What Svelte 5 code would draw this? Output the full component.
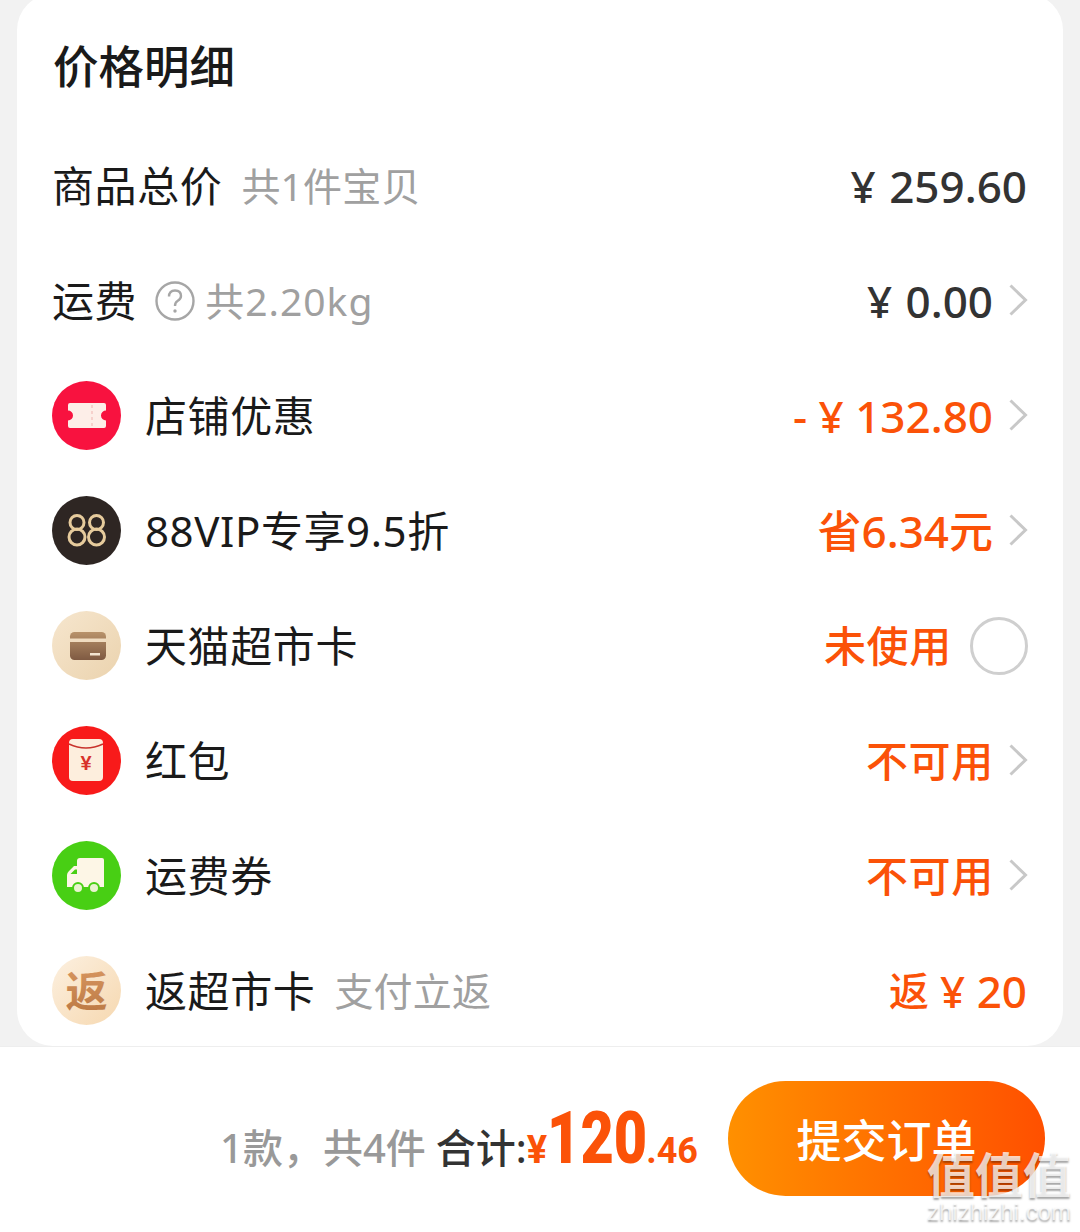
<script>
  const stack = [
    { id: "shop", label: "店铺优惠", value: "- ¥ 132.80", num: true, arrow: true },
    { id: "vip", label: "88VIP专享9.5折", value: "省6.34元", num: true, arrow: true },
    { id: "card", label: "天猫超市卡", value: "未使用", radio: true },
    { id: "red", label: "红包", value: "不可用", arrow: true },
    { id: "truck", label: "运费券", value: "不可用", arrow: true },
    { id: "back", label: "返超市卡", sub: "支付立返", prefix: "返", value: "¥ 20", num: true }
  ];
</script>

{#snippet arrow()}
  <svg class="arrow" width="20" height="34" viewBox="0 0 20 34">
    <path d="M2.5 2.5 L17.5 17 L2.5 31.5" fill="none" stroke="#c8c8c8" stroke-width="3" />
  </svg>
{/snippet}

{#snippet icon(id)}
  <svg class="icon" width="69" height="69" viewBox="0 0 69 69">
    <defs>
      <linearGradient id="cardbg-{id}" x1="0" y1="0" x2="1" y2="1">
        <stop offset="0" stop-color="#f6e6ce" />
        <stop offset="1" stop-color="#ebd3ae" />
      </linearGradient>
      <linearGradient id="cardfg-{id}" x1="0" y1="0" x2="0" y2="1">
        <stop offset="0" stop-color="#b8926a" />
        <stop offset="1" stop-color="#7f5a42" />
      </linearGradient>
      <linearGradient id="backbg-{id}" x1="0" y1="0" x2="1" y2="1">
        <stop offset="0" stop-color="#fcf0e0" />
        <stop offset="1" stop-color="#f6d8b0" />
      </linearGradient>
      <linearGradient id="backfg-{id}" x1="0" y1="0" x2="0" y2="1">
        <stop offset="0" stop-color="#dc9a64" />
        <stop offset="1" stop-color="#b97742" />
      </linearGradient>
    </defs>
    {#if id === "shop"}
      <circle cx="34.5" cy="34.5" r="34.5" fill="#f8123f" />
      <path d="M18 22 H52 Q54 22 54 24 V29.500 A5 5 0 0 0 54 39.500 V45 Q54 47 52 47 H18 Q16 47 16 45 V39.500 A5 5 0 0 0 16 29.500 V24 Q16 22 18 22 Z" fill="#fdeee8" />
      <path d="M40 24 V46" stroke="#f3c8c2" stroke-width="1.500" stroke-dasharray="3 3" />
    {:else if id === "vip"}
      <circle cx="34.5" cy="34.500" r="34.500" fill="#2e2623" />
      <g fill="none" stroke="#e6cb9c" stroke-width="3">
        <circle cx="25" cy="26.500" r="7" />
        <circle cx="25" cy="41" r="8" />
        <circle cx="44.500" cy="26.500" r="7" />
        <circle cx="44.500" cy="41" r="8" />
      </g>
    {:else if id === "card"}
      <circle cx="34.500" cy="34.500" r="34.500" fill="url(#cardbg-{id})" />
      <rect x="18" y="21" width="36" height="28" rx="4.500" fill="url(#cardfg-{id})" />
      <rect x="18" y="27.500" width="36" height="3.500" fill="#f0dcc0" />
      <rect x="38" y="42" width="10" height="2.500" fill="#f3e4d0" />
    {:else if id === "red"}
      <circle cx="34.500" cy="34.500" r="34.500" fill="#f81a1a" />
      <rect x="17" y="13" width="34" height="42" rx="4" fill="#fdeedd" />
      <path d="M17 18 Q34 26 51 18" fill="none" stroke="#c8322c" stroke-width="1.500" />
      <text x="34" y="44" class="yen">¥</text>
    {:else if id === "truck"}
      <circle cx="34.500" cy="34.500" r="34.500" fill="#48cf14" />
      <path d="M25 20 Q25 17 28 17 H50 Q52 17 52 19 V46 H15 V34 Q15 32 17 30 L22 25 H25 Z" fill="#fdf6e6" />
      <path d="M18.500 33 L23 28.500 H25 V33 Z" fill="#48cf14" />
      <circle cx="26" cy="47" r="5" fill="#e9f3cf" stroke="#48cf14" stroke-width="2" />
      <circle cx="42" cy="47" r="5" fill="#e9f3cf" stroke="#48cf14" stroke-width="2" />
    {:else}
      <circle cx="34.500" cy="34.500" r="34.500" fill="url(#backbg-{id})" />
      <text x="34.500" y="51" class="fan" fill="url(#backfg-{id})">返</text>
    {/if}
  </svg>
{/snippet}

<div class="page">
  <main class="card">
    <h1>价格明细</h1>

    <div class="row">
      <div class="left"><span class="label">商品总价</span><span class="sub">共1件宝贝</span></div>
      <div class="right"><span class="value num dark">¥ 259.60</span></div>
    </div>

    <div class="row">
      <div class="left">
        <span class="label">运费</span>
        <svg class="help" width="40" height="40" viewBox="0 0 40 40">
          <circle cx="20" cy="20" r="18.500" fill="none" stroke="#a6a6a6" stroke-width="2.400" />
          <path d="M14 15.500 Q14 9.500 20 9.500 Q26 9.500 26 15 Q26 18 22.500 20 Q20 21.500 20 25" fill="none" stroke="#a6a6a6" stroke-width="2.400" />
          <circle cx="20" cy="30" r="1.700" fill="#a6a6a6" />
        </svg>
        <span class="sub tight">共2.20kg</span>
      </div>
      <div class="right"><span class="value num dark">¥ 0.00</span>{@render arrow()}</div>
    </div>

    {#each stack as item}
      <div class="row">
        <div class="left">
          {@render icon(item.id)}
          <span class="label">{item.label}</span>
          {#if item.sub}<span class="sub">{item.sub}</span>{/if}
        </div>
        <div class="right">
          {#if item.prefix}<span class="prefix">{item.prefix}</span>{/if}
          <span class="value" class:num={item.num}>{item.value}</span>
          {#if item.arrow}{@render arrow()}{/if}
          {#if item.radio}<span class="radio"></span>{/if}
        </div>
      </div>
    {/each}
  </main>

  <footer>
    <div class="summary">
      <span class="count">1款，共4件</span>
      <span class="total">合计:</span>
      <span class="price"><i>¥</i><b>120</b><em>.46</em></span>
    </div>
    <button type="button">提交订单</button>
    <div class="mark"><strong>值值值</strong><small>zhizhizhi.com</small></div>
  </footer>
</div>

<style>
  :global(body) {
    margin: 0;
    background: #f2f2f2;
  }
  .page {
    width: 1080px;
    height: 1232px;
    display: flex;
    flex-direction: column;
    overflow: hidden;
    font-family: "Noto Sans", "Noto Sans CJK SC", sans-serif;
    color: #1a1a1a;
  }
  .card {
    height: 1052px;
    flex: none;
    box-sizing: border-box;
    margin: -6px 17px 0;
    padding: 0 35px;
    background: #fff;
    border-radius: 36px;
  }
  h1 {
    margin: 0 0 0 1px;
    height: 134px;
    padding-top: 44px;
    box-sizing: border-box;
    line-height: 52px;
    font-size: 45.500px;
    font-weight: 500;
    font-family: "Noto Sans CJK SC", sans-serif;
  }
  .row {
    height: 115px;
    display: flex;
    align-items: center;
    justify-content: space-between;
  }
  .left,
  .right {
    display: flex;
    align-items: center;
  }
  .right {
    color: #fb5208;
  }
  .icon {
    margin-right: 24px;
  }
  .label {
    font-size: 42px;
    line-height: 50px;
    letter-spacing: 0.6px;
  }
  .sub {
    font-size: 39px;
    line-height: 50px;
    letter-spacing: 0.2px;
    color: #a0a0a0;
    margin-left: 19px;
  }
  .sub.tight {
    margin-left: 0;
    letter-spacing: 1px;
  }
  .help {
    margin: 0 10px 0 18px;
  }
  .value {
    font-size: 42px;
    line-height: 50px;
    font-weight: 500;
    letter-spacing: 0.7px;
  }
  .value.num {
    font-size: 44px;
    letter-spacing: 0;
    margin-right: 1px;
  }
  .value.dark {
    color: #333;
    word-spacing: 2px;
  }
  .prefix {
    font-size: 40px;
    line-height: 50px;
    font-weight: 500;
    margin-right: 11px;
  }
  .arrow {
    margin: 0 0 2px 14px;
  }
  .radio {
    width: 52px;
    height: 52px;
    border: 3px solid #cfcfcf;
    border-radius: 50%;
    margin-left: 18px;
  }
  footer {
    flex: 1;
    position: relative;
    display: flex;
    align-items: center;
    justify-content: flex-end;
    padding: 0 35px 2px 0;
    background: #fff;
    border-top: 1px solid #eee;
  }
  .summary {
    display: flex;
    align-items: baseline;
  }
  .count {
    font-size: 40px;
    font-weight: 500;
    color: #999;
  }
  .total {
    font-size: 40px;
    font-weight: 500;
    color: #333;
    margin-left: 10px;
  }
  .price {
    color: #fb5208;
    font-family: Roboto, sans-serif;
    font-weight: 700;
    display: flex;
    align-items: baseline;
    margin: 0 30px 0 0;
  }
  .price i {
    font-style: normal;
    font-size: 38px;
  }
  .price b {
    font-size: 72px;
    line-height: 72px;
    transform: scaleX(0.8);
    transform-origin: left;
    margin-right: -26px;
  }
  .price em {
    font-style: normal;
    font-size: 36px;
  }
  button {
    width: 317px;
    height: 115px;
    border: 0;
    border-radius: 58px;
    background: linear-gradient(90deg, #ff9000, #ff5000);
    color: #fff;
    font-family: "Noto Sans CJK SC", sans-serif;
    font-size: 45px;
    font-weight: 500;
  }
  .mark {
    position: absolute;
    right: 8px;
    bottom: 8px;
    width: 146px;
    display: flex;
    flex-direction: column;
    gap: 3px;
    align-items: center;
    color: rgba(255, 255, 255, 0.75);
    text-shadow: 0 2px 2px rgba(0, 0, 0, 0.35);
    font-family: "Noto Sans CJK SC", sans-serif;
  }
  .mark strong {
    font-size: 48px;
    line-height: 50px;
    font-weight: 700;
  }
  .mark small {
    font-size: 24px;
    line-height: 24px;
    font-family: "Liberation Sans", sans-serif;
  }
  .yen {
    font-family: "Liberation Sans", sans-serif;
    font-size: 20px;
    font-weight: 700;
    fill: #d8322a;
    text-anchor: middle;
  }
  .fan {
    font-family: "Noto Sans CJK SC", sans-serif;
    font-size: 42px;
    font-weight: 700;
    text-anchor: middle;
  }
</style>
